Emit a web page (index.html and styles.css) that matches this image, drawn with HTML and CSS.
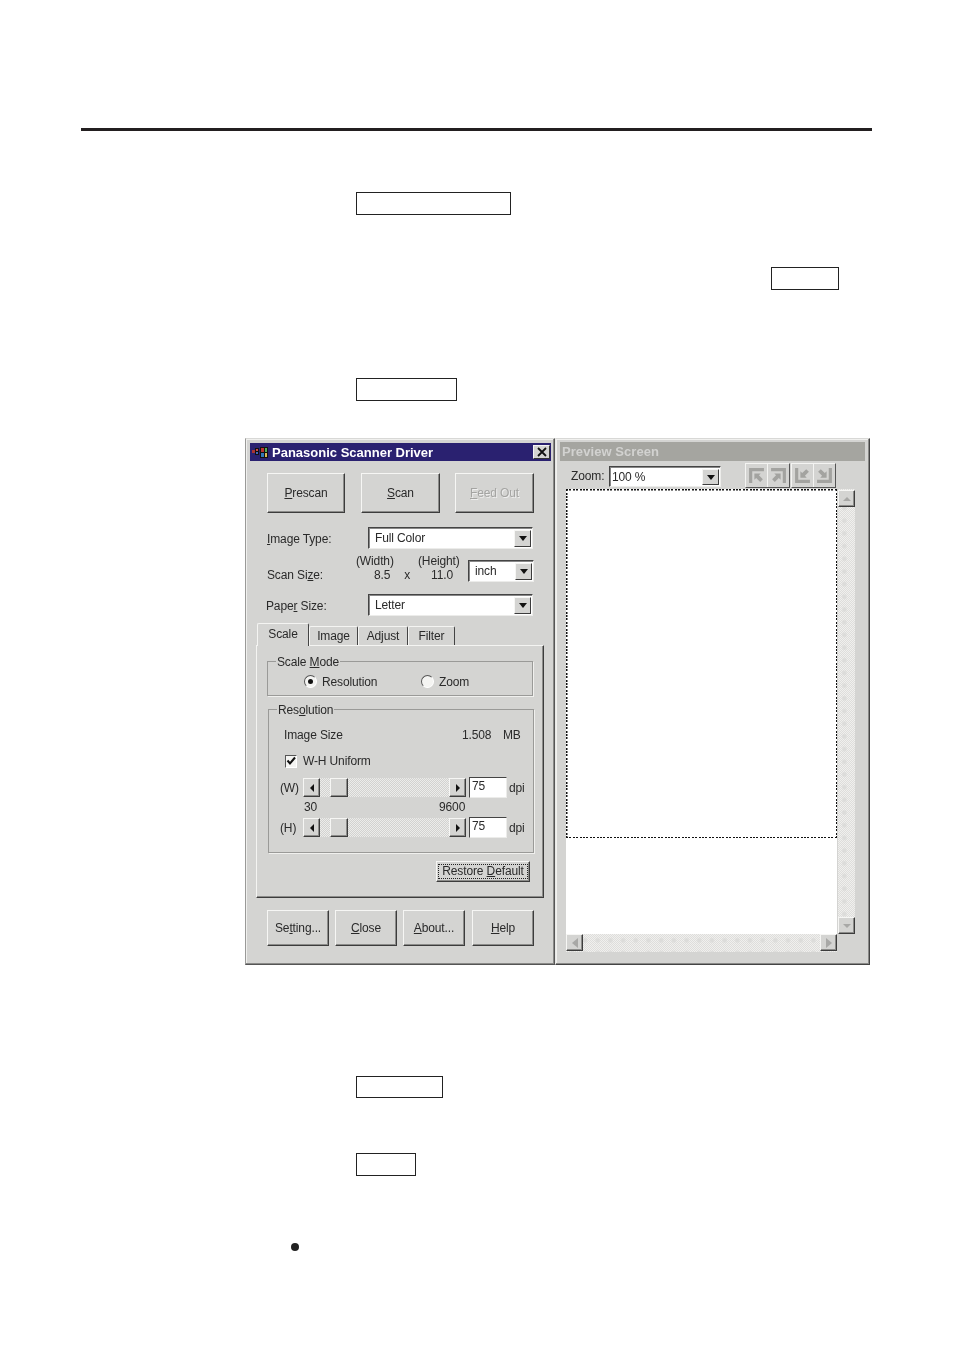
FILE: index.html
```html
<!DOCTYPE html>
<html lang="en">
<head>
<meta charset="utf-8">
<title>Panasonic Scanner Driver</title>
<link rel="stylesheet" href="styles.css">
</head>
<body>
<div class="rule"></div>
<div class="key key-a"></div>
<div class="key key-b"></div>
<div class="key key-c"></div>

<div class="window">
  <section class="pane-left">
    <header class="titlebar">
      <svg class="app-icon" viewBox="0 0 18 14" width="18" height="14" aria-hidden="true">
        <rect x="0" y="5" width="3" height="3" fill="#a33"/><rect x="3" y="3" width="4" height="7" fill="#111"/>
        <rect x="4" y="4" width="2" height="2" fill="#c44"/><rect x="4" y="7" width="2" height="2" fill="#46b"/>
        <path d="M8 2h8v11H8z" fill="#111"/>
        <rect x="9" y="3" width="3" height="4" fill="#b33"/><rect x="13" y="3" width="2" height="4" fill="#5a5"/>
        <rect x="9" y="8" width="3" height="4" fill="#37b"/><rect x="13" y="8" width="2" height="4" fill="#db5"/>
      </svg>
      <span class="title-text">Panasonic Scanner Driver</span>
      <span class="close">
        <svg viewBox="0 0 10 10" width="10" height="10" aria-hidden="true"><path d="M1 1l8 8M9 1l-8 8" stroke="#111" stroke-width="1.8"/></svg>
      </span>
    </header>

    <div class="btn-row top-btns">
      <button class="btn w78"><u>P</u>rescan</button>
      <button class="btn w79"><u>S</u>can</button>
      <button class="btn w79 disabled"><u>F</u>eed Out</button>
    </div>

    <div class="form-row first">
      <span class="lab"><u>I</u>mage Type:</span>
      <div class="combo w165"><span class="combo-val">Full Color</span><span class="arrow"><i class="tri-d"></i></span></div>
    </div>

    <div class="scan">
      <span class="sc-head">(Width)</span>
      <span class="sc-head">(Height)</span>
      <div class="combo inch"><span class="combo-val">inch</span><span class="arrow"><i class="tri-d"></i></span></div>
      <span class="sc-lab">Scan Si<u>z</u>e:</span>
      <span class="sc-w"><span>8.5</span><span>x</span></span>
      <span class="sc-h">11.0</span>
    </div>

    <div class="form-row paper">
      <span class="lab lab-paper">Pape<u>r</u> Size:</span>
      <div class="combo w165"><span class="combo-val">Letter</span><span class="arrow"><i class="tri-d"></i></span></div>
    </div>

    <nav class="tabs">
      <span class="tab active">Scale</span>
      <span class="tab t-image">Image</span>
      <span class="tab t-adjust">Adjust</span>
      <span class="tab t-filter">Filter</span>
    </nav>

    <div class="panel">
      <div class="group g-mode">
        <span class="legend">Scale <u>M</u>ode</span>
        <div class="radios">
          <label class="radio r1"><i class="dot on"></i>Resolution</label>
          <label class="radio"><i class="dot"></i>Zoom</label>
        </div>
      </div>

      <div class="group g-res">
        <span class="legend">Res<u>o</u>lution</span>
        <div class="size-row"><span>Image Size</span><span>1.508</span><span>MB</span></div>
        <div class="check-row">
          <i class="check"><svg viewBox="0 0 10 10" width="10" height="10" aria-hidden="true"><path d="M1.500 4.500l2.500 3 5-6" fill="none" stroke="#111" stroke-width="2"/></svg></i>
          W-H Uniform
        </div>
        <div class="slider-row">
          <span class="sl-lab">(W)</span>
          <div class="sl"><span class="sb-btn"><i class="tri-l"></i></span><span class="thumb"></span><span class="sb-btn end"><i class="tri-r"></i></span></div>
          <span class="num">75</span><span class="dpi">dpi</span>
        </div>
        <div class="range"><span>30</span><span>9600</span></div>
        <div class="slider-row">
          <span class="sl-lab">(H)</span>
          <div class="sl"><span class="sb-btn"><i class="tri-l"></i></span><span class="thumb"></span><span class="sb-btn end"><i class="tri-r"></i></span></div>
          <span class="num">75</span><span class="dpi">dpi</span>
        </div>
      </div>

      <button class="btn restore"><span class="focus">Restore <u>D</u>efault</span></button>
    </div>

    <div class="btn-row bottom-btns">
      <button class="btn b62">Se<u>t</u>ting...</button>
      <button class="btn b62"><u>C</u>lose</button>
      <button class="btn b62"><u>A</u>bout...</button>
      <button class="btn b62"><u>H</u>elp</button>
    </div>
  </section>

  <section class="pane-right">
    <header class="titlebar off">Preview Screen</header>
    <div class="toolbar">
      <span class="zoom-lab">Zoom:</span>
      <div class="combo zoom"><span class="combo-val z">100 %</span><span class="arrow"><i class="tri-d"></i></span></div>
      <div class="tools">
        <div class="tool-group">
          <span class="tool"><svg viewBox="0 0 16 16" width="17" height="17" aria-hidden="true"><path d="M1 15V1h14v3H4v11zM6 6h6l-1.700 1.700L14 11.500 11.500 14 7.700 10.300 6 12z" fill="#a3a3a0"/></svg></span>
          <span class="tool"><svg viewBox="0 0 16 16" width="17" height="17" aria-hidden="true"><path d="M1 1h14v14h-3V4H1zM10 6v6l-1.700-1.700L4.500 14 2 11.500l3.700-3.800L4 6z" fill="#a3a3a0"/></svg></span>
        </div>
        <div class="tool-group">
          <span class="tool"><svg viewBox="0 0 16 16" width="17" height="17" aria-hidden="true"><path d="M1 1h3v11h11v3H1zM6 10V4l1.700 1.700L11.500 2 14 4.500l-3.700 3.800L12 10z" fill="#a3a3a0"/></svg></span>
          <span class="tool"><svg viewBox="0 0 16 16" width="17" height="17" aria-hidden="true"><path d="M12 1h3v14H1v-3h11zM10 10H4l1.700-1.700L2 4.500 4.500 2l3.800 3.700L10 4z" fill="#a3a3a0"/></svg></span>
        </div>
      </div>
    </div>
    <div class="preview-grid">
      <div class="preview"><div class="marquee"></div></div>
      <div class="vscroll">
        <span class="sb-btn"><i class="tri-u"></i></span>
        <span class="sb-btn"><i class="tri-dg"></i></span>
      </div>
      <div class="hscroll">
        <span class="sb-btn"><i class="tri-lg"></i></span>
        <span class="sb-btn"><i class="tri-rg"></i></span>
      </div>
    </div>
  </section>
</div>

<div class="key key-d"></div>
<div class="key key-e"></div>
<div class="bullet"></div>
</body>
</html>
```

FILE: styles.css
```css
* { box-sizing: border-box; }
html, body { margin: 0; padding: 0; background: #fff; }
body { width: 954px; height: 1351px; overflow: hidden; font-family: "Liberation Sans", Arial, sans-serif; font-size: 12px; letter-spacing: -.13px; color: #2a2a2a; }
u { text-underline-offset: 1px; }
i { display: block; font-style: normal; }

.rule { margin: 128px 0 0 81px; width: 791px; height: 3px; background: #231f20; }
.key { border: 1px solid #222; background: #fff; }
.key-a { margin: 61px 0 0 356px; width: 155px; height: 23px; }
.key-b { margin: 52px 0 0 771px; width: 68px; height: 23px; }
.key-c { margin: 88px 0 0 356px; width: 101px; height: 23px; }
.key-d { margin: 111px 0 0 356px; width: 87px; height: 22px; }
.key-e { margin: 55px 0 0 356px; width: 60px; height: 23px; }
.bullet { margin: 67px 0 0 291px; width: 8px; height: 8px; border-radius: 50%; background: #222; }

.window { margin: 37px 0 0 245px; width: 625px; height: 527px; display: flex; background: #d4d4d2; filter: blur(.35px); }

.pane-left, .pane-right { height: 100%; border: 1px solid #555; border-top-color: #d8d8d6; box-shadow: inset -1px -1px 0 #8a8a88, inset 1px 1px 0 #f0f0ee; }
.pane-left { width: 310px; padding: 4px 0 0 4px; border-left-color: #9a9a98; }
.pane-right { width: 315px; padding: 3px 0 0 4px; border-left-color: #e8e8e6; border-right-color: #444; border-bottom-color: #444; }

.titlebar { height: 18px; width: 301px; display: flex; align-items: center; background: #2a2170; color: #fff; font-weight: 700; font-size: 13px; letter-spacing: 0; padding: 0 1px 0 2px; }
.title-text { margin-left: 2px; flex: 1; }
.close { width: 17px; height: 14px; display: flex; align-items: center; justify-content: center; background: #d4d4d2; border: 1px solid #333; border-top-color: #f4f4f4; border-left-color: #f4f4f4; }
.titlebar.off { width: 305px; height: 19px; background: #a5a5a0; color: #d2d2d0; padding-left: 2px; letter-spacing: .07px; }

.btn { font: inherit; letter-spacing: inherit; color: inherit; padding: 0; background: #d4d4d2; border: 1px solid #3c3c3c; border-top-color: #f6f6f4; border-left-color: #f6f6f4; box-shadow: inset -1px -1px 0 #8c8c8a; display: flex; align-items: center; justify-content: center; }
.btn-row { display: flex; }
.top-btns { margin: 12px 0 0 17px; gap: 16px; height: 40px; }
.top-btns .w79 + .w79 { margin-left: -1px; }
.w78 { width: 78px; }
.w79 { width: 79px; }
.disabled { color: #a4a4a2; text-shadow: 1px 1px 0 #eee; }
.bottom-btns { margin: 12px 0 0 17px; height: 36px; gap: 6px; }
.b62 { width: 62px; }
.b62:last-child { margin-left: 1px; }

.form-row { display: flex; align-items: center; height: 22px; margin-left: 17px; }
.form-row.first { margin-top: 14px; }
.form-row.paper { margin-top: 12px; margin-left: 16px; }
.lab { width: 101px; padding-top: 1px; }
.lab-paper { width: 102px; }

.combo { height: 22px; display: flex; align-items: stretch; background: #fff; border: 1px solid #ececea; border-top-color: #444; border-left-color: #444; box-shadow: inset 1px 1px 0 #888; padding: 2px 1px 1px 2px; }
.w165 { width: 165px; }
.combo-val { flex: 1; padding-left: 4px; line-height: 17px; }
.combo-val.z { padding-left: 0; }
.arrow { width: 17px; display: flex; align-items: center; justify-content: center; background: #d4d4d2; border: 1px solid #3c3c3c; border-top-color: #f6f6f4; border-left-color: #f6f6f4; }
.tri-d { width: 0; height: 0; border: 4px solid transparent; border-top: 5px solid #111; border-bottom: 0; }

.scan { display: grid; grid-template-columns: 89px 62px 50px 66px; grid-template-rows: 14px 14px; margin: 5px 0 0 17px; height: 28px; line-height: 14px; }
.sc-head:first-child { grid-column: 2; grid-row: 1; }
.sc-head:nth-child(2) { grid-column: 3; grid-row: 1; }
.inch { grid-column: 4; grid-row: 1 / span 2; align-self: end; }
.sc-lab { grid-column: 1; grid-row: 2; }
.sc-w { grid-column: 2; grid-row: 2; display: flex; gap: 14px; padding-left: 18px; }
.sc-h { grid-column: 3; grid-row: 2; padding-left: 13px; }

.tabs { display: flex; align-items: flex-end; height: 22px; margin: 7px 0 0 7px; position: relative; z-index: 1; }
.tab { width: 49px; height: 19px; display: flex; align-items: center; justify-content: center; border: 1px solid #444; border-bottom: 0; border-top-color: #f4f4f2; border-left-color: #f4f4f2; border-radius: 2px 2px 0 0; background: #d4d4d2; }
.tab.active { width: 52px; height: 23px; margin-bottom: -1px; padding-bottom: 3px; }
.t-adjust { width: 50px; }
.t-filter { width: 47px; }

.panel { margin-left: 6px; width: 288px; height: 253px; padding: 15px 0 0 10px; border: 1px solid #3c3c3c; border-top-color: #f4f4f2; border-left-color: #f4f4f2; box-shadow: inset -1px -1px 0 #8c8c8a; }
.group { position: relative; border: 1px solid #9a9a98; box-shadow: 1px 1px 0 #f0f0ee; }
.legend { position: absolute; top: -7px; left: 8px; padding: 0 1px; background: #d4d4d2; line-height: 14px; }
.g-mode { width: 266px; height: 35px; padding: 11px 0 0 36px; }
.radios { display: flex; height: 17px; align-items: center; }
.radio { display: flex; align-items: center; gap: 5px; }
.r1 { width: 117px; }
.dot { width: 13px; height: 13px; border-radius: 50%; background: #f4f4f2; border: 1px solid #555; border-right-color: #fff; border-bottom-color: #fff; display: flex; align-items: center; justify-content: center; }
.dot.on::after { content: ""; width: 5px; height: 5px; border-radius: 50%; background: #111; }

.g-res { margin: 13px 0 0 1px; width: 266px; height: 144px; padding: 18px 0 0 11px; }
.g-res > .legend { left: 8px; }
.size-row { display: grid; grid-template-columns: 178px 41px auto; height: 14px; line-height: 14px; margin-left: 4px; }
.check-row { display: flex; align-items: center; gap: 6px; height: 14px; margin: 12px 0 0 5px; }
.check { width: 12px; height: 13px; background: #f4f4f2; border: 1px solid #555; border-right-color: #fff; border-bottom-color: #fff; display: flex; align-items: center; justify-content: center; }
.slider-row { display: flex; align-items: center; height: 21px; margin-top: 9px; }
.sl-lab { width: 23px; }
.sl { width: 163px; height: 19px; display: flex; background: repeating-conic-gradient(#ececea 0 25%, #d2d2d0 0 50%) 0 0 / 2px 2px; }
.sb-btn { width: 17px; height: 17px; flex: none; display: flex; align-items: center; justify-content: center; background: #d4d4d2; border: 1px solid #3c3c3c; border-top-color: #f6f6f4; border-left-color: #f6f6f4; box-shadow: inset -1px -1px 0 #8c8c8a; }
.sl .sb-btn { height: 19px; }
.sl .end { margin-left: auto; }
.thumb { width: 18px; height: 19px; margin-left: 10px; background: #d4d4d2; border: 1px solid #3c3c3c; border-top-color: #f6f6f4; border-left-color: #f6f6f4; box-shadow: inset -1px -1px 0 #8c8c8a; }
.tri-l { width: 0; height: 0; border: 4px solid transparent; border-right: 4px solid #111; border-left: 0; }
.tri-r { width: 0; height: 0; border: 4px solid transparent; border-left: 4px solid #111; border-right: 0; }
.tri-u { width: 0; height: 0; border: 4px solid transparent; border-bottom: 4px solid #a8a8a6; border-top: 0; }
.tri-dg { width: 0; height: 0; border: 4px solid transparent; border-top: 4px solid #a8a8a6; border-bottom: 0; }
.tri-lg { width: 0; height: 0; border: 5px solid transparent; border-right: 6px solid #a8a8a6; border-left: 0; }
.tri-rg { width: 0; height: 0; border: 5px solid transparent; border-left: 6px solid #a8a8a6; border-right: 0; }
.num { width: 38px; height: 21px; margin-left: 3px; padding: 0 0 3px 2px; line-height: 17px; background: #fff; border: 1px solid #ececea; border-top-color: #444; border-left-color: #444; }
.dpi { margin-left: 2px; }
.range { display: grid; grid-template-columns: 135px auto; margin: 1px 0 -7px 24px; height: 16px; line-height: 16px; }
.restore { margin: 8px 0 0 169px; width: 94px; height: 21px; }
.focus { display: block; width: 90px; height: 15px; line-height: 13px; border: 1px dotted #222; white-space: nowrap; text-align: center; }

.toolbar { display: flex; align-items: flex-start; height: 26px; margin-top: 2px; padding-left: 11px; }
.zoom-lab { width: 38px; line-height: 21px; margin-top: 3px; }
.combo.zoom { width: 112px; height: 21px; margin-top: 3px; }
.tools { display: flex; gap: 1px; margin-left: 24px; height: 25px; }
.tool-group { display: flex; border: 1px solid #555; border-top-color: #f4f4f2; border-left-color: #f4f4f2; }
.tool { width: 21px; height: 23px; display: flex; align-items: center; justify-content: center; background: #d4d4d2; }
.tool + .tool { width: 22px; border-left: 1px solid #f4f4f2; }

.preview-grid { display: grid; grid-template-columns: 271px 18px; grid-template-rows: 445px 18px; margin-left: 6px; }
.preview { background: #fff; }
.marquee { height: 349px; background:
  repeating-linear-gradient(90deg, #111 0 2px, transparent 2px 3.4px) left top / 100% 1.5px no-repeat,
  repeating-linear-gradient(90deg, #111 0 2px, transparent 2px 3.4px) left bottom / 100% 1.5px no-repeat,
  repeating-linear-gradient(0deg, #111 0 2px, transparent 2px 3.4px) left top / 1.5px 100% no-repeat,
  repeating-linear-gradient(0deg, #111 0 2px, transparent 2px 3.4px) right top / 1.5px 100% no-repeat; }
.vscroll, .hscroll { background:
  radial-gradient(circle, #dcdcda 0 1.5px, transparent 3px) 0 0 / 12.7px 12.7px,
  repeating-conic-gradient(#f0f0ee 0 25%, #dedddb 0 50%) 0 0 / 2px 2px; }
.vscroll { margin-left: 1px; display: flex; flex-direction: column; justify-content: space-between; padding: 1px 0 0; }
.hscroll { display: flex; justify-content: space-between; }
```
